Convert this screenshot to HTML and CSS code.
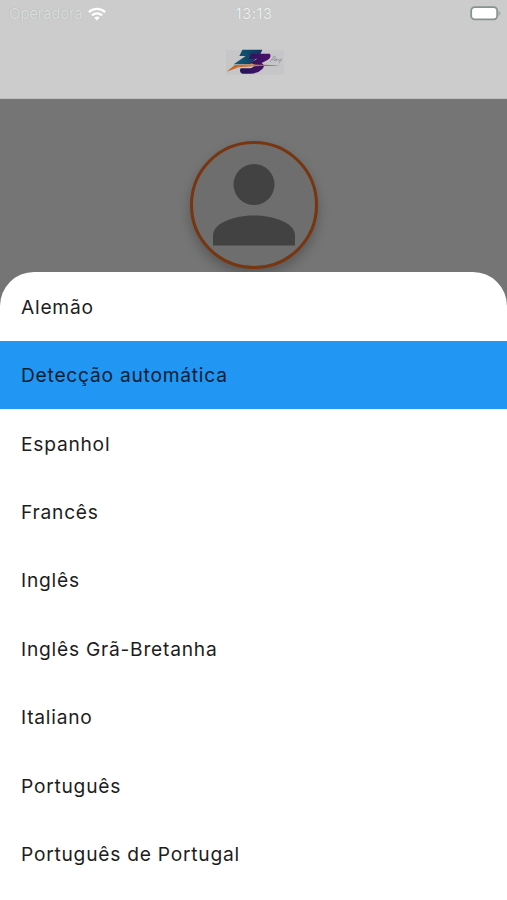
FILE: index.html
```html
<!DOCTYPE html>
<html lang="pt">
<head>
<meta charset="utf-8">
<title>Idioma</title>
<link rel="stylesheet" href="styles.css">
</head>
<body>
<div class="screen">
  <header class="header">
    <div class="status">
      <div class="carrier"><span class="carrier-name">Operadora</span>
        <svg class="wifi" viewBox="0 0 18 14"><g fill="none" stroke="#fff" stroke-width="2.3"><path d="M.9 5.1a11.7 11.7 0 0 1 16.2 0"/><path d="M4 8.4a7.3 7.3 0 0 1 10 0"/></g><path d="M6.3 10.8a4 4 0 0 1 5.4 0L9 13.6z" fill="#fff"/></svg>
      </div>
      <span class="time">13:13</span>
      <svg class="battery" viewBox="0 0 31 16"><rect x="1.2" y="1.2" width="26" height="12.2" rx="3.6" fill="#fff" stroke="#87938d" stroke-width="1.8"/><path d="M28.4 4.7q2.2.5 2.2 2.6t-2.2 2.6z" fill="#a4b1aa"/></svg>
    </div>
    <svg class="logo" viewBox="0 0 240 135">
      <defs>
        <linearGradient id="teal" x1="0" x2="1"><stop offset="0" stop-color="#0d5f78"/><stop offset="1" stop-color="#14315c"/></linearGradient>
        <linearGradient id="purple" x1="0" x2="1"><stop offset="0" stop-color="#25145c"/><stop offset="1" stop-color="#4c1067"/></linearGradient>
        <linearGradient id="orange" x1="0" x2="1"><stop offset="0" stop-color="#c4601c"/><stop offset=".5" stop-color="#cc824c"/><stop offset="1" stop-color="#5c3528"/></linearGradient>
      </defs>
      <rect x="33" y="30" width="174" height="74" fill="#c6c6c8"/>
      <path d="M82 29h60l-6 14-30 30H56l36-25H73z" fill="url(#teal)"/>
      <path d="M108 41h56q7 9-5 18l-19 10q12 8 2 18-13 14-36 14H82q-11-4-5-16h24q12 0 16-7 2-6-12-8l22-14h-25z" fill="url(#purple)"/>
      <path d="M35 95l24-20 50-2 86 3-76 3-48 3z" fill="url(#orange)"/>
      <path d="M165 66l12-18q7 1 1 9-4 4-7 2m15-2q-8 0-8 6 4 1 8-6v6m4-6l2 6 8-6-8 13" fill="none" stroke="#8e8d96" stroke-width="2.2"/>
    </svg>
  </header>
  <main class="profile">
    <div class="avatar">
      <svg viewBox="0 0 82 82"><circle cx="41" cy="20.5" r="20.5"/><path d="M0 81.5V71.5C0 58.5 22 51.5 41 51.5S82 58.5 82 71.5v10z"/></svg>
    </div>
  </main>
  <ul class="sheet">
    <li class="option">Alemão</li>
    <li class="option selected">Detecção automática</li>
    <li class="option">Espanhol</li>
    <li class="option">Francês</li>
    <li class="option">Inglês</li>
    <li class="option">Inglês Grã-Bretanha</li>
    <li class="option">Italiano</li>
    <li class="option">Português</li>
    <li class="option">Português de Portugal</li>
  </ul>
</div>
</body>
</html>
```

FILE: styles.css
```css
* { box-sizing: border-box; }
body { margin: 0; font-family: Inter, sans-serif; }
.screen {
  position: relative;
  width: 507px;
  height: 900px;
  overflow: hidden;
  background: #757575;
}
.header {
  height: 99px;
  background: #ccc;
  border-bottom: 1px solid #bdbdbd;
  display: flex;
  flex-direction: column;
  align-items: center;
}
.status {
  width: 100%;
  height: 27px;
  padding: 0 6px 0 9px;
  display: grid;
  grid-template-columns: 1fr auto 1fr;
  align-items: center;
  color: #eef0ef;
  font-size: 15px;
  line-height: 27px;
  text-shadow: 0 0 1px #98a19c;
}
.carrier { display: flex; align-items: center; gap: 6px; }
.carrier-name { color: #dcdfdd; width: 73px; letter-spacing: -.25px; }
.wifi { width: 18px; height: 14px; }
.time { letter-spacing: .4px; margin-right: 2px; }
.battery { width: 31px; height: 16px; justify-self: end; }
.logo { width: 80px; height: 45px; margin: 13px 0 0 3px; }
.profile { display: flex; justify-content: center; padding-top: 42px; }
.avatar {
  width: 128px;
  height: 128px;
  border: 3px solid #773510;
  border-radius: 50%;
  background: #6e6e6e;
  box-shadow: 0 6px 12px rgba(0, 0, 0, .25);
  display: flex;
  justify-content: center;
  align-items: center;
}
.avatar svg { width: 82px; height: 82px; fill: #424242; }
.sheet {
  position: absolute;
  top: 272px;
  left: 0;
  right: 0;
  bottom: 0;
  margin: 0;
  padding: .6px 0 0;
  list-style: none;
  background: #fff;
  border-radius: 34px 34px 0 0;
}
.option {
  height: 68.4px;
  padding: .2px 21px 0;
  display: flex;
  align-items: center;
  color: #1d1d1d;
  font-size: 19.2px;
  letter-spacing: .76px;
  white-space: nowrap;
}
.selected { background: #2196f3; color: #071d30; }
```
